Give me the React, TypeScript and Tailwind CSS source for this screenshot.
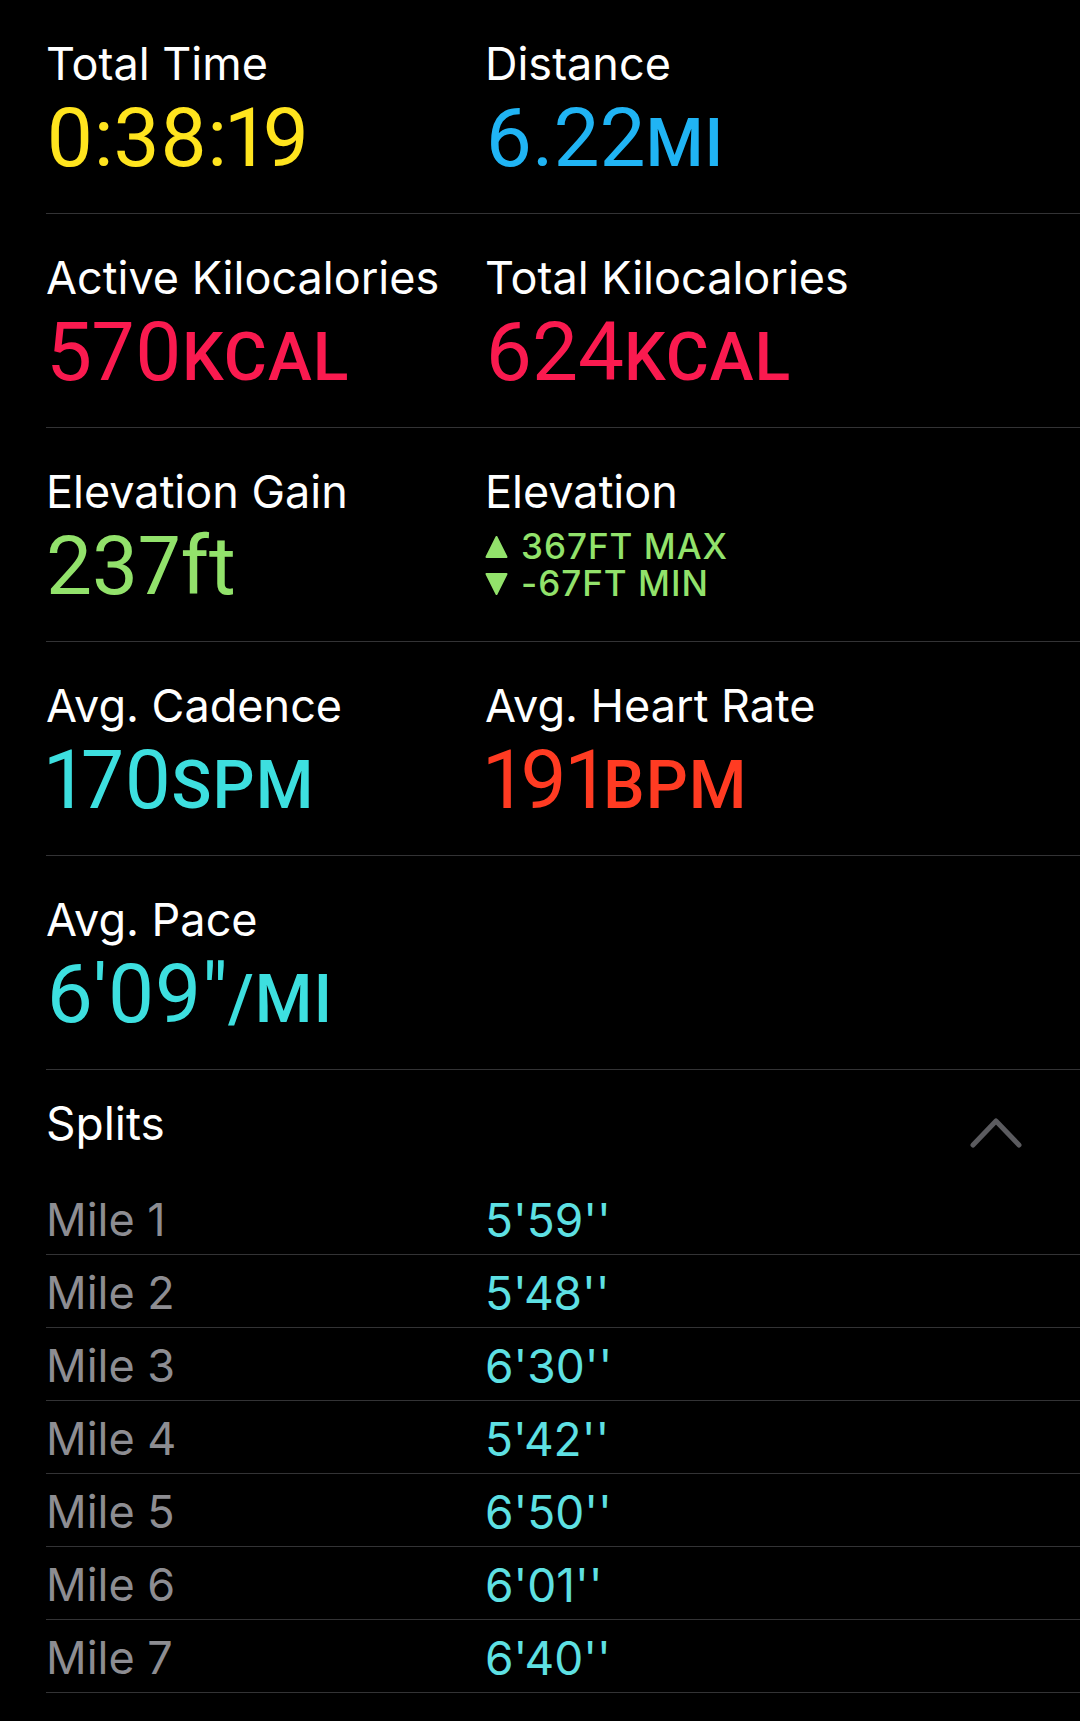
import React from "react";

interface Stat {
  label: string;
  value?: string;
  unit?: string;
  color: string;
}

const rows: Stat[][] = [
  [
    { label: "Total Time", value: "0:38:19", color: "text-[#ffe41e]" },
    { label: "Distance", value: "6.22", unit: "MI", color: "text-[#20b4f4]" },
  ],
  [
    { label: "Active Kilocalories", value: "570", unit: "KCAL", color: "text-[#fa1a4f]" },
    { label: "Total Kilocalories", value: "624", unit: "KCAL", color: "text-[#fa1a4f]" },
  ],
  [
    { label: "Elevation Gain", value: "237ft", color: "text-[#92e26b]" },
    { label: "Elevation", color: "text-[#92e26b]" },
  ],
  [
    { label: "Avg. Cadence", value: "170", unit: "SPM", color: "text-[#3ddfdf]" },
    { label: "Avg. Heart Rate", value: "191", unit: "BPM", color: "text-[#ff3b22]" },
  ],
  [{ label: "Avg. Pace", value: "6'09\"", unit: "/MI", color: "text-[#3ddfdf]" }],
];

const splits = [
  ["Mile 1", "5'59''"],
  ["Mile 2", "5'48''"],
  ["Mile 3", "6'30''"],
  ["Mile 4", "5'42''"],
  ["Mile 5", "6'50''"],
  ["Mile 6", "6'01''"],
  ["Mile 7", "6'40''"],
];

const Triangle = ({ down }: { down?: boolean }) => (
  <svg width="23" height="24" viewBox="0 0 23 24" className="mr-[13px] shrink-0">
    {down ? (
      <path d="M1.5 2h20L11.5 22z" fill="#92e26b" stroke="#92e26b" strokeWidth="2" strokeLinejoin="round" />
    ) : (
      <path d="M11.5 2l10 20h-20z" fill="#92e26b" stroke="#92e26b" strokeWidth="2" strokeLinejoin="round" />
    )}
  </svg>
);

const StatCell = ({ stat }: { stat: Stat }) => (
  <div className="pt-[41px]">
    <div className="font-['Inter'] text-[45px] leading-none text-white">{stat.label}</div>
    {stat.value ? (
      <div className={`mt-[11px] font-['Roboto'] text-[82px] leading-none whitespace-nowrap proportional-nums ${stat.color}`}>
        {stat.value}
        {stat.unit && <span className="text-[66px] font-medium tracking-[1px]">{stat.unit}</span>}
      </div>
    ) : (
      <div className={`mt-[14px] font-['Inter'] text-[35px] font-medium leading-[37px] tracking-[1px] ${stat.color}`}>
        <div className="flex h-[37px] items-center"><Triangle />367FT MAX</div>
        <div className="flex h-[37px] items-center"><Triangle down />-67FT MIN</div>
      </div>
    )}
  </div>
);

export default function App() {
  return (
    <div className="min-h-screen bg-black">
      <div className="ml-[46px]">
        {rows.map((row, i) => (
          <div key={i} className="grid h-[214px] grid-cols-[439px_1fr] border-b border-[#333335]">
            {row.map((stat) => (
              <StatCell key={stat.label} stat={stat} />
            ))}
          </div>
        ))}

        <div className="flex justify-between pt-[30px] pr-[58px]">
          <div className="font-['Inter'] text-[46px] leading-none text-white">Splits</div>
          <svg width="52" height="31" viewBox="0 0 52 31" className="mt-[17px]">
            <polyline points="3,28 26,4 49,28" fill="none" stroke="#5b5b5f" strokeWidth="5" strokeLinecap="round" strokeLinejoin="round" />
          </svg>
        </div>

        <div className="mt-[34px]">
          {splits.map(([mile, pace]) => (
            <div key={mile} className="grid h-[73px] grid-cols-[439px_1fr] border-b border-[#333335] pt-[15px]">
              <div className="font-['Inter'] text-[45px] leading-none text-[#8d8d92]">{mile}</div>
              <div className="font-['Inter'] text-[46px] leading-none text-[#5ee0e3]">{pace}</div>
            </div>
          ))}
        </div>
      </div>
    </div>
  );
}
